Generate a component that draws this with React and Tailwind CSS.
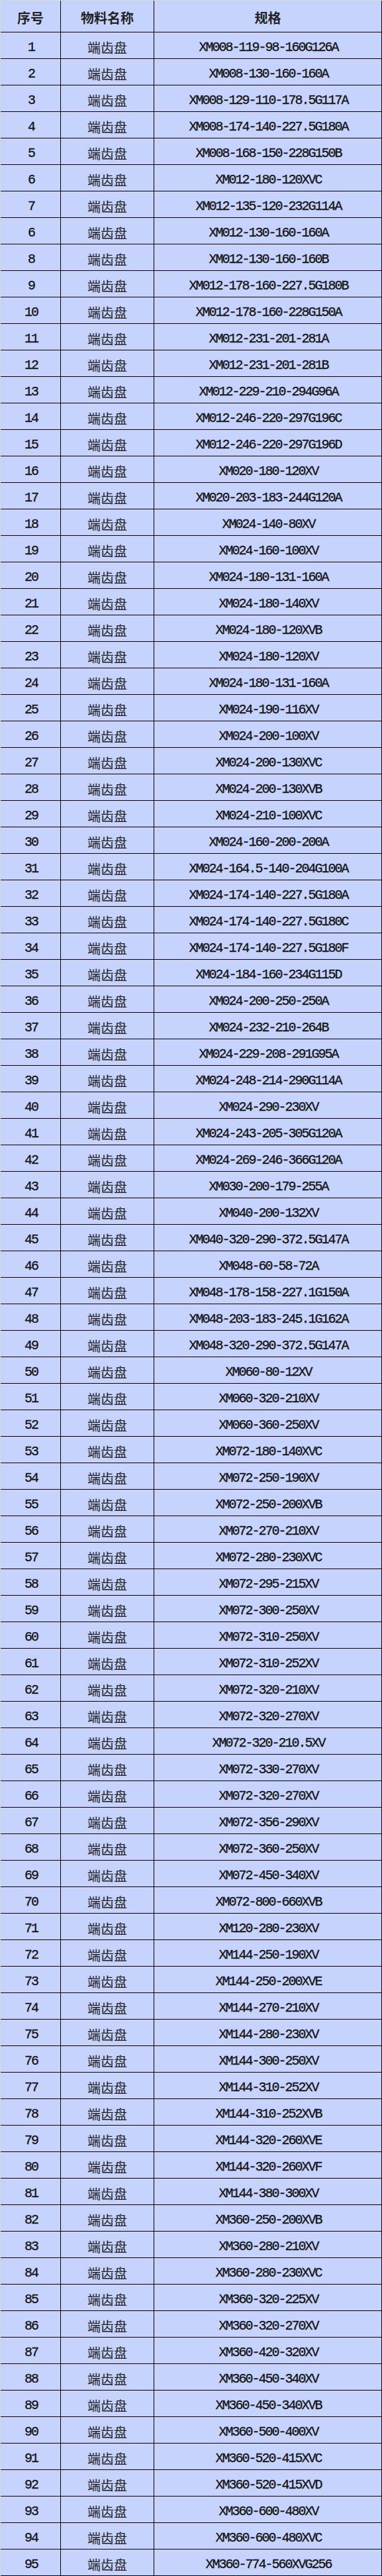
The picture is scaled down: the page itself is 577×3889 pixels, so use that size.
import React from "react";

const specs = [
  ["1", "XM008-119-98-160G126A"],
  ["2", "XM008-130-160-160A"],
  ["3", "XM008-129-110-178.5G117A"],
  ["4", "XM008-174-140-227.5G180A"],
  ["5", "XM008-168-150-228G150B"],
  ["6", "XM012-180-120XVC"],
  ["7", "XM012-135-120-232G114A"],
  ["6", "XM012-130-160-160A"],
  ["8", "XM012-130-160-160B"],
  ["9", "XM012-178-160-227.5G180B"],
  ["10", "XM012-178-160-228G150A"],
  ["11", "XM012-231-201-281A"],
  ["12", "XM012-231-201-281B"],
  ["13", "XM012-229-210-294G96A"],
  ["14", "XM012-246-220-297G196C"],
  ["15", "XM012-246-220-297G196D"],
  ["16", "XM020-180-120XV"],
  ["17", "XM020-203-183-244G120A"],
  ["18", "XM024-140-80XV"],
  ["19", "XM024-160-100XV"],
  ["20", "XM024-180-131-160A"],
  ["21", "XM024-180-140XV"],
  ["22", "XM024-180-120XVB"],
  ["23", "XM024-180-120XV"],
  ["24", "XM024-180-131-160A"],
  ["25", "XM024-190-116XV"],
  ["26", "XM024-200-100XV"],
  ["27", "XM024-200-130XVC"],
  ["28", "XM024-200-130XVB"],
  ["29", "XM024-210-100XVC"],
  ["30", "XM024-160-200-200A"],
  ["31", "XM024-164.5-140-204G100A"],
  ["32", "XM024-174-140-227.5G180A"],
  ["33", "XM024-174-140-227.5G180C"],
  ["34", "XM024-174-140-227.5G180F"],
  ["35", "XM024-184-160-234G115D"],
  ["36", "XM024-200-250-250A"],
  ["37", "XM024-232-210-264B"],
  ["38", "XM024-229-208-291G95A"],
  ["39", "XM024-248-214-290G114A"],
  ["40", "XM024-290-230XV"],
  ["41", "XM024-243-205-305G120A"],
  ["42", "XM024-269-246-366G120A"],
  ["43", "XM030-200-179-255A"],
  ["44", "XM040-200-132XV"],
  ["45", "XM040-320-290-372.5G147A"],
  ["46", "XM048-60-58-72A"],
  ["47", "XM048-178-158-227.1G150A"],
  ["48", "XM048-203-183-245.1G162A"],
  ["49", "XM048-320-290-372.5G147A"],
  ["50", "XM060-80-12XV"],
  ["51", "XM060-320-210XV"],
  ["52", "XM060-360-250XV"],
  ["53", "XM072-180-140XVC"],
  ["54", "XM072-250-190XV"],
  ["55", "XM072-250-200XVB"],
  ["56", "XM072-270-210XV"],
  ["57", "XM072-280-230XVC"],
  ["58", "XM072-295-215XV"],
  ["59", "XM072-300-250XV"],
  ["60", "XM072-310-250XV"],
  ["61", "XM072-310-252XV"],
  ["62", "XM072-320-210XV"],
  ["63", "XM072-320-270XV"],
  ["64", "XM072-320-210.5XV"],
  ["65", "XM072-330-270XV"],
  ["66", "XM072-320-270XV"],
  ["67", "XM072-356-290XV"],
  ["68", "XM072-360-250XV"],
  ["69", "XM072-450-340XV"],
  ["70", "XM072-800-660XVB"],
  ["71", "XM120-280-230XV"],
  ["72", "XM144-250-190XV"],
  ["73", "XM144-250-200XVE"],
  ["74", "XM144-270-210XV"],
  ["75", "XM144-280-230XV"],
  ["76", "XM144-300-250XV"],
  ["77", "XM144-310-252XV"],
  ["78", "XM144-310-252XVB"],
  ["79", "XM144-320-260XVE"],
  ["80", "XM144-320-260XVF"],
  ["81", "XM144-380-300XV"],
  ["82", "XM360-250-200XVB"],
  ["83", "XM360-280-210XV"],
  ["84", "XM360-280-230XVC"],
  ["85", "XM360-320-225XV"],
  ["86", "XM360-320-270XV"],
  ["87", "XM360-420-320XV"],
  ["88", "XM360-450-340XV"],
  ["89", "XM360-450-340XVB"],
  ["90", "XM360-500-400XV"],
  ["91", "XM360-520-415XVC"],
  ["92", "XM360-520-415XVD"],
  ["93", "XM360-600-480XV"],
  ["94", "XM360-600-480XVC"],
  ["95", "XM360-774-560XVG256"],
];

const mono = "font-['Liberation_Mono',monospace] text-[20px] tracking-[-2px] text-[#151515] [-webkit-text-stroke:0.35px_#151515]";
const cjk = "font-['Noto_Sans_CJK_SC',sans-serif] text-[20px] text-[#222]";

export default function App() {
  return (
    <div className="bg-[#d6d6d6] pt-[1px] pl-[1px] w-[577px]">
      <div className="w-[576px] bg-[#c6d4fd]">
        <div className="grid grid-cols-[91px_141px_344px] h-[48px]">
          <div className={`${cjk} font-bold text-[#111] flex items-center justify-center border-r border-b border-black pt-[5px] leading-none`}>序号</div>
          <div className={`${cjk} font-bold text-[#111] flex items-center justify-center border-r border-b border-black pt-[5px] leading-none`}>物料名称</div>
          <div className={`${cjk} font-bold text-[#111] flex items-center justify-center border-r border-b border-black pt-[5px] leading-none`}>规格</div>
        </div>
        {specs.map(([n, s], i) => (
          <div key={i} className="grid grid-cols-[91px_141px_344px] h-[40px]">
            <div className={`${mono} flex items-center justify-center border-r border-b border-black pt-[6px] pl-[2px] leading-none`}>{n}</div>
            <div className={`${cjk} flex items-center justify-center border-r border-b border-black pt-[6px] leading-none`}>端齿盘</div>
            <div className={`${mono} flex items-center justify-center border-r border-b border-black pt-[6px] pl-[2px] leading-none`}>{s}</div>
          </div>
        ))}
      </div>
    </div>
  );
}
